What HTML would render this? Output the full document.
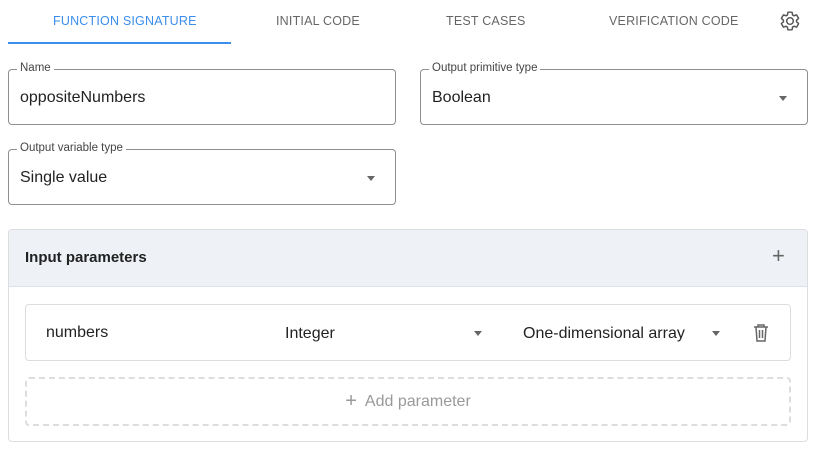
<!DOCTYPE html><html><head><style>
body{margin:0;width:815px;height:449px;background:#fff;font-family:"Liberation Sans",Roboto,sans-serif;position:relative;overflow:hidden;color:#222}
.a{position:absolute}
.tab{position:absolute;top:14px;font-size:12.5px;color:#666;letter-spacing:.2px}
.f{position:absolute;border:1px solid #8f8f8f;border-radius:4px;height:54px}
.lab{position:absolute;top:-8px;left:8px;background:#fff;padding:0 3px;font-size:11.5px;color:#444}
.val{position:absolute;left:11px;top:19px;font-size:16px;color:#222}
.arr{position:absolute;width:0;height:0;border-left:4.5px solid transparent;border-right:4.5px solid transparent;border-top:5px solid #666}
</style></head><body>
<div class="tab" style="left:53px;color:#3b8eea">FUNCTION SIGNATURE</div>
<div class="tab" style="left:276px">INITIAL CODE</div>
<div class="tab" style="left:446px">TEST CASES</div>
<div class="tab" style="left:609px">VERIFICATION CODE</div>
<div class="a" style="left:8px;top:42px;width:223px;height:2px;background:#3b8eea"></div>
<svg class="a" style="left:779px;top:10px" width="22" height="22" viewBox="0 0 24 24"><path d="M19.14 12.94c.04-.3.06-.61.06-.94 0-.32-.02-.64-.07-.94l2.03-1.58a.49.49 0 0 0 .12-.61l-1.92-3.32a.49.49 0 0 0-.59-.22l-2.39.96c-.5-.38-1.030-.7-1.62-.94l-.36-2.54a.48.48 0 0 0-.48-.41h-3.84a.48.48 0 0 0-.47.41l-.36 2.540c-.59.24-1.13.57-1.62.94l-2.39-.96a.48.48 0 0 0-.59.22L2.74 8.87a.47.47 0 0 0 .12.61l2.03 1.58c-.05.3-.09.63-.09.94s.02.64.07.94l-2.03 1.58a.49.49 0 0 0-.12.61l1.92 3.32c.12.22.37.29.59.22l2.39-.96c.5.38 1.03.7 1.62.94l.36 2.54c.05.24.24.41.48.41h3.84c.24 0 .44-.17.47-.41l.36-2.54c.59-.24 1.13-.56 1.62-.94l2.39.96c.22.08.47 0 .59-.22l1.92-3.32c.12-.22.07-.47-.12-.61l-2.01-1.58zM12 15.6A3.6 3.6 0 1 1 12 8.4a3.6 3.6 0 0 1 0 7.2z" fill="none" stroke="#555" stroke-width="1.6"/></svg>
<div class="f" style="left:8px;top:69px;width:386px"><span class="lab">Name</span><span class="val">oppositeNumbers</span></div>
<div class="f" style="left:420px;top:69px;width:386px"><span class="lab">Output primitive type</span><span class="val">Boolean</span><span class="arr" style="left:358px;top:26px"></span></div>
<div class="f" style="left:8px;top:149px;width:386px"><span class="lab">Output variable type</span><span class="val">Single value</span><span class="arr" style="left:358px;top:26px"></span></div>
<div class="a" style="left:8px;top:229px;width:798px;height:211px;border:1px solid #ddd;border-radius:4px;overflow:hidden">
<div class="a" style="left:0;top:0;width:798px;height:56px;background:#eef2f7;border-bottom:1px solid #dde2e8"></div>
<div class="a" style="left:16px;top:19px;font-size:15px;font-weight:bold;color:#222">Input parameters</div>
<div class="a" style="left:763px;top:13px;font-size:22px;color:#666;font-weight:300">+</div>
<div class="a" style="left:16px;top:74px;width:764px;height:55px;border:1px solid #ddd;border-radius:4px">
<span class="a" style="left:20px;top:19px;font-size:16px">numbers</span>
<span class="a" style="left:259px;top:20px;font-size:16px">Integer</span>
<span class="arr" style="left:448px;top:26px"></span>
<span class="a" style="left:497px;top:20px;font-size:16px">One-dimensional array</span>
<span class="arr" style="left:686px;top:26px"></span>
<svg class="a" style="left:727px;top:19px" width="16" height="18" viewBox="0 0 16 18"><path d="M1 3h14M5 3V1h6v2M3 3l1 14h8l1-14M6.5 6v8M9.5 6v8" fill="none" stroke="#666" stroke-width="1.5"/></svg>
</div>
<div class="a" style="left:16px;top:147px;width:762px;height:45px;border:2px dashed #ddd;border-radius:4px;text-align:center;line-height:45px;font-size:16px;color:#999"><span style="font-size:20px;vertical-align:-1px">+</span>&nbsp; Add parameter</div>
</div>
</body></html>
